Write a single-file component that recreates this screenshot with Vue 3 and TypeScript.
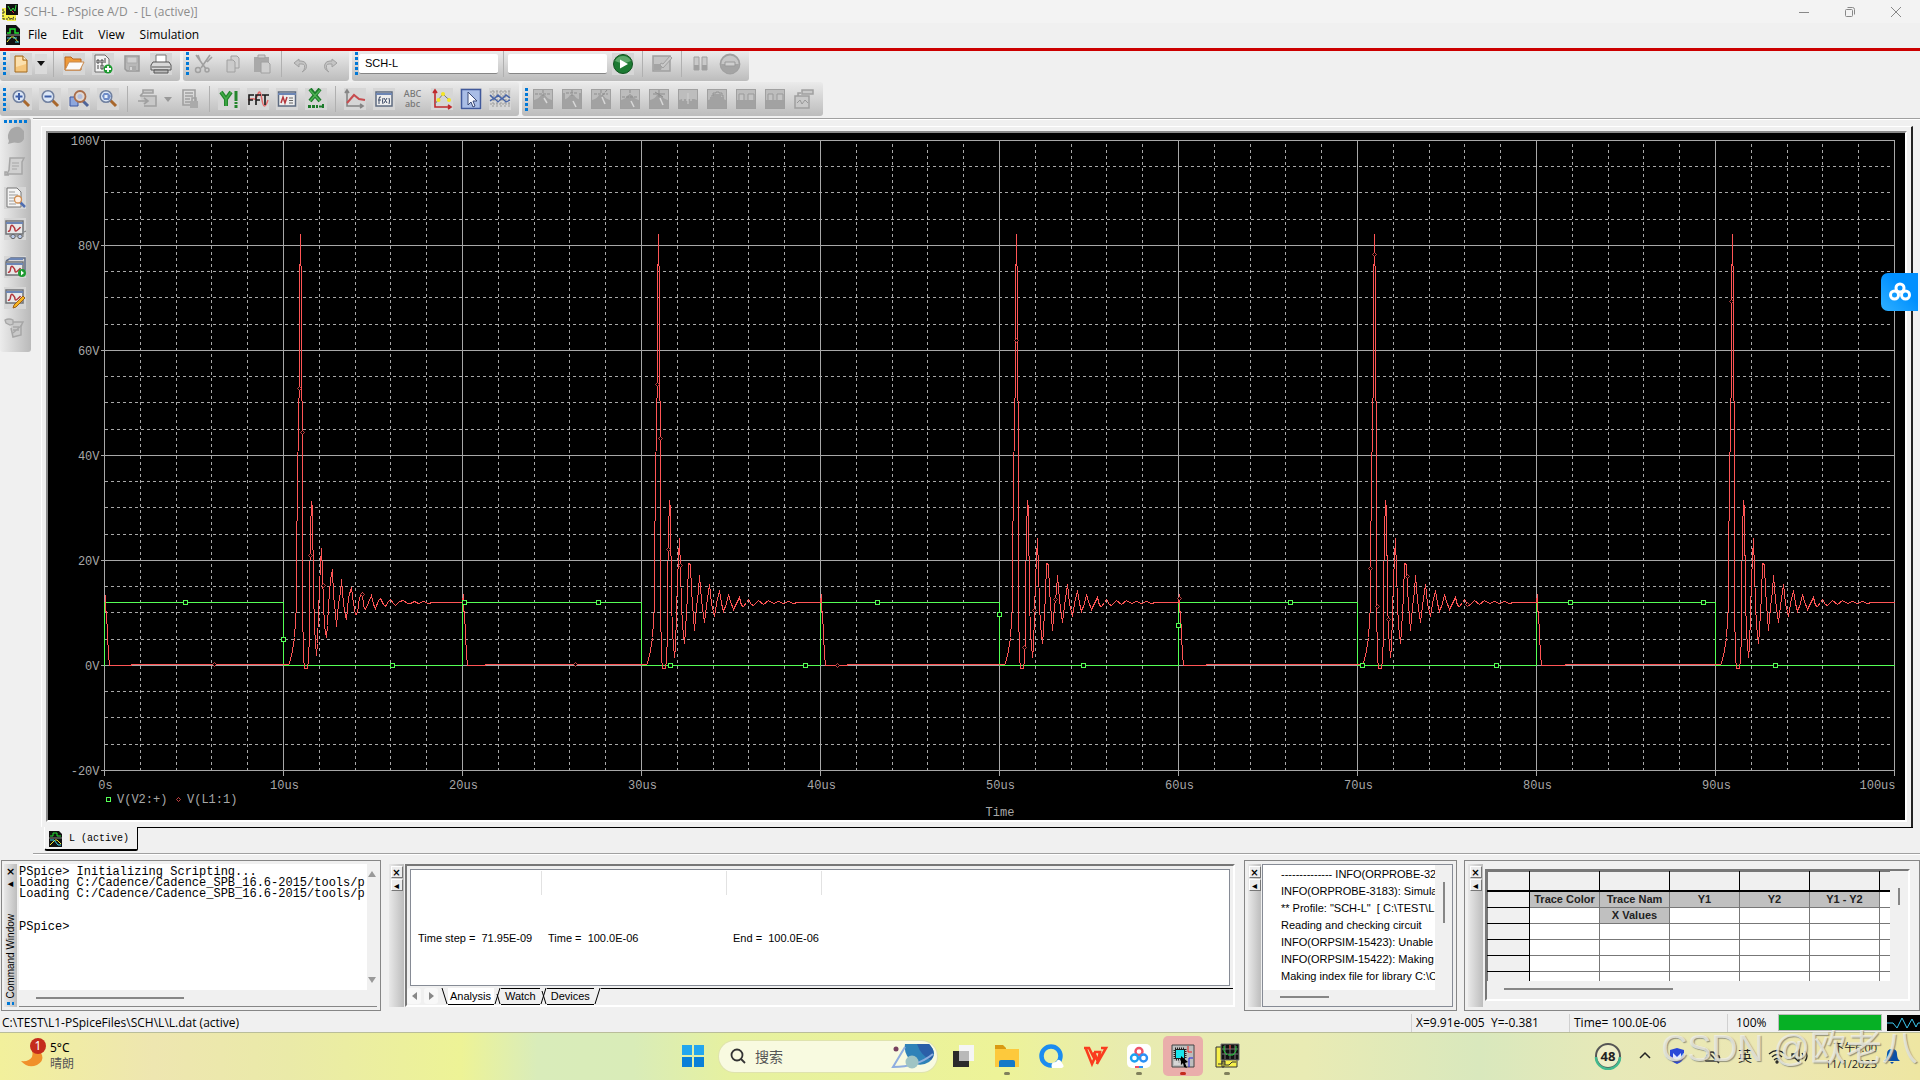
<script setup lang="ts">
import { ref } from 'vue'

interface Tool {
  icon?: string
  label?: string
  kind?: 'sep' | 'caret' | 'wide-sep'
  off?: boolean
}

const profile = ref('SCH-L')
const runTo = ref('')
const search = ref('')

const wave = '<rect x="2" y="3" width="17" height="13" fill="#e8e8e8" stroke="#6f7276" stroke-width="1.5"/><path d="M2 5h17" stroke="#6d86b5" stroke-width="2"/><path d="M4 13q2 1 2.500-3t2.500-2 2 4 2.500 0 3-3" fill="none" stroke="#b3353b" stroke-width="1.500"/>'
const probe = (mark: string) =>
  `<rect x="1.500" y="1.500" width="19" height="19" fill="#bcbcbc" stroke="#a0a0a0"/><path d="M2 12q5-1 7-5h4q2 4 7 5v8H2z" fill="#a2a2a2"/>${mark}`

const icons: Record<string, string> = {
  new: '<path d="M5 3h8l4 4v12H5z" fill="#f5c67c" stroke="#a0681f"/><path d="M6 4h6v4h4v3L6 14z" fill="#fbe0ae"/><path d="M13 3v4h4" fill="#fff3d8" stroke="#a0681f"/>',
  open: '<path d="M2 17V4h6l2 2h8v11z" fill="#ee9a3a" stroke="#b8641c"/><path d="M2 17L6 9h15l-4 8z" fill="#fbfbfb" stroke="#c98a4e"/>',
  add: '<path d="M3 2h10l4 4v13H3z" fill="#f3f3f3" stroke="#6d6d6d"/><path d="M5 7h2v3H5zM9 7h2v3H9zM13 5v5M6 12v4M9 12h2v4H9z" fill="none" stroke="#444"/><circle cx="16" cy="16" r="4.500" fill="#1d9a30"/><path d="M16 13v6M13 16h6" stroke="#fff" stroke-width="1.800"/>',
  save: '<path d="M4 3h14v15H6l-2-2z" fill="#b8b8b8" stroke="#999" stroke-width="1.500"/><path d="M6 4h10v6H6z" fill="#cfcfcf" stroke="#aaa"/><path d="M8 13h7v5H8z" fill="#aaa"/><path d="M9 14h2v3H9z" fill="#d4d4d4"/>',
  print: '<path d="M6 2h10v8H6z" fill="#fff" stroke="#777"/><path d="M3 9h16l2 3v5H1v-5z" fill="#d8d8d8" stroke="#555"/><path d="M2 14h18M4 17h14v3H4z" stroke="#555" fill="#bbb"/>',
  cut: '<path d="M3 2l10 14M17 2L8 15M5 2l2 5M19 4l-5 5" stroke="#a0a0a0" stroke-width="1.600"/><circle cx="5" cy="17" r="2.500" fill="none" stroke="#a0a0a0" stroke-width="1.500"/><circle cx="14" cy="17" r="2" fill="none" stroke="#a0a0a0" stroke-width="1.500"/>',
  copy: '<path d="M9 3h6l2 2v10H9z" fill="#d2d2d2" stroke="#a0a0a0"/><path d="M5 7h6l2 2v10H5z" fill="#cbcbcb" stroke="#a0a0a0"/>',
  paste: '<path d="M3 4h15v15H3z" fill="#a9a9a9"/><path d="M7 2h7v3H7z" fill="#d0d0d0" stroke="#a0a0a0"/><path d="M10 9h7l2 2v9h-9z" fill="#cfcfcf" stroke="#a0a0a0"/>',
  undo: '<path d="M9 6l-5 4 5 4v-3h3q4 0 2 6l-2 2q6-3 4-8-1-3-5-3H9z" fill="#c4c4c4" stroke="#a0a0a0"/>',
  redo: '<path d="M13 6l5 4-5 4v-3h-3q-4 0-2 6l2 2q-6-3-4-8 1-3 5-3h2z" fill="#c4c4c4" stroke="#a0a0a0"/>',
  play: '<circle cx="11" cy="11" r="9.500" fill="#1c7a32" stroke="#11521f"/><path d="M3 8a9 9 0 0 1 16 0q-8 4-16 0z" fill="#5da96b"/><path d="M8 6.500l8 4.500-8 4.500z" fill="#fff"/>',
  editsim: '<path d="M2 3h17v15H2z" fill="#c3c3c3" stroke="#a0a0a0" stroke-width="1.500"/><path d="M3 11h9l-2 6H3z" fill="#a4a4a4"/><path d="M9 12l3 3 9-10-2-2-7 8-2-1z" fill="#c9c9c9" stroke="#a0a0a0"/>',
  pause: '<path d="M4 4h5v13H4zM12 4h5v13h-5z" fill="#c9c9c9" stroke="#a0a0a0"/><path d="M4 12h5v5H4zM12 12h5v5h-5z" fill="#a0a0a0"/>',
  stop: '<circle cx="11" cy="11" r="9.500" fill="#c6c6c6" stroke="#a0a0a0" stroke-width="1.800"/><path d="M2 11h18q-1 9-9 9t-9-9z" fill="#a4a4a4"/><path d="M6 9h10v4H6z" fill="#cfcfcf" stroke="#999"/>',
  zin: '<path d="M13 12l6 6" stroke="#a8672c" stroke-width="3"/><circle cx="9" cy="8.500" r="5.800" fill="#dce7f6" stroke="#7181a0" stroke-width="1.500"/><path d="M9 5v7M5.500 8.500h7" stroke="#3d5ea8" stroke-width="2"/>',
  zout: '<path d="M13 12l6 6" stroke="#a8672c" stroke-width="3"/><circle cx="9" cy="8.500" r="5.800" fill="#dce7f6" stroke="#7181a0" stroke-width="1.500"/><path d="M5.500 8.500h7" stroke="#3d5ea8" stroke-width="2"/>',
  zarea: '<path d="M2 9h8v9H2z" fill="#8ea7dd" stroke="#3d56a0"/><path d="M15 13l5 5" stroke="#4f6599" stroke-width="3"/><circle cx="12" cy="8.500" r="5.500" fill="#dfd7d2" stroke="#ab6d49" stroke-width="1.800"/><circle cx="12" cy="8.500" r="2.500" fill="#b5bfdc"/>',
  zfit: '<path d="M13 12l6 6" stroke="#a8672c" stroke-width="3"/><circle cx="9" cy="8.500" r="5.800" fill="#dce7f6" stroke="#7181a0" stroke-width="1.500"/><path d="M5 8l2-3h4l3 3-2 4H7z" fill="#6f8cc8"/><path d="M7.500 7h3v3h-3z" fill="#e8f0fb"/>',
  expr: '<path d="M7 2h10v3H7zM4 8h16v10H8M4 8l3-3M2 13h9M8 10l4 3-4 3" fill="#c8c8c8" stroke="#a0a0a0" stroke-width="1.600"/>',
  lock: '<path d="M4 2h12v15H4zM6 5h8M6 8h8M6 11h5M6 14h5" fill="none" stroke="#a0a0a0" stroke-width="1.600"/><path d="M11 13h8v7h-8z" fill="#aaa"/><path d="M13 13v-3h4v3" fill="none" stroke="#a0a0a0" stroke-width="1.500"/>',
  yaxis: '<path d="M3 4l5 7v7M13 4l-5 7" fill="none" stroke="#23862c" stroke-width="4"/><path d="M3 4l5 7v7M13 4l-5 7" fill="none" stroke="#43ad48" stroke-width="1.500"/><path d="M18 3v17" stroke="#23862c" stroke-width="3" stroke-dasharray="10 1 2 1"/>',
  fft: '<path d="M1 12q4-2 6-1t4-5 4 6 6 0" fill="none" stroke="#e46b6b" stroke-width="1.500"/><path d="M2 17V7h5M2 12h4M9 17V7h5M9 12h4M15 7h7M18 7v10" fill="none" stroke="#1a1a1a" stroke-width="1.600"/>',
  perf: '<rect x="2.500" y="4" width="17" height="14" fill="#eee" stroke="#5e6b80" stroke-width="1.500"/><path d="M2 6h18" stroke="#6d86b5" stroke-width="2"/><path d="M5 15l2-6 2 6 2-6" fill="none" stroke="#b3353b" stroke-width="1.500"/><path d="M13 10h4M13 12.500h4M13 15h4" stroke="#666"/>',
  excel: '<path d="M5 1l10 12M15 1L5 13" stroke="#1c7a2a" stroke-width="4"/><path d="M5 2l10 11M15 2L5 13" stroke="#4db253" stroke-width="1.500"/><path d="M3 18.500h10" stroke="#1c7a2a" stroke-width="3" stroke-dasharray="3 1"/><path d="M14 18.500h5M18 16v4" stroke="#1c7a2a" stroke-width="2"/>',
  trace: '<path d="M3 2v16h16M1 5l2-3 2 3M16 16l3 2-3 2" fill="none" stroke="#858585" stroke-width="1.600"/><path d="M3 15l7-8 5 4 6 1" fill="none" stroke="#c74c4f" stroke-width="2"/>',
  func: '<rect x="3" y="4" width="16" height="14" fill="#eee" stroke="#5e6b80" stroke-width="1.500"/><path d="M3 6h16" stroke="#6d86b5" stroke-width="2"/><path d="M8 9q-2-1-2 2v5M5 12h3M10 10q-1 3 0 6M11 10l3 5M14 10l-3 5M16 10q1 3 0 6" fill="none" stroke="#3c4a66"/>',
  axes: '<path d="M4 2v17h16M2 5l2-3 2 3M17 17l3 2-3 2" fill="none" stroke="#c0282c" stroke-width="1.600"/><path d="M4 16l3-4 5-6 4 4 3 2" fill="none" stroke="#777"/><circle cx="7.500" cy="12" r="2" fill="#f4e522"/><circle cx="12" cy="6" r="2" fill="#f4e522"/><circle cx="18" cy="12" r="2" fill="#f4e522"/>',
  pick: '<rect x="1.500" y="1.500" width="19" height="19" fill="#a9bde6" stroke="#41599b" stroke-width="1.500"/><path d="M8 4v13l3-3 2 5 2-1-2-5h4z" fill="#f6f8ff" stroke="#3a4a77"/>',
  grid: '<path d="M1 4h20M1 8h20M1 12h20M1 16h20M4 2v18M8 2v18M12 2v18M16 2v18M20 2v18" stroke="#9b9b9b" stroke-dasharray="2 1"/><path d="M1 7l4 4 4-4 4 4 4-4 4 3" fill="none" stroke="#4664a8" stroke-width="1.500"/><path d="M1 13l4-3 4 4 4-4 4 4 4-2" fill="none" stroke="#4664a8" stroke-width="1.200"/>',
  p1: probe('<path d="M3 6h16M11 2v6" stroke="#8d8d8d" stroke-dasharray="3 1"/><path d="M12 10l3 5" stroke="#d8d8d8" stroke-width="1.500"/>'),
  p2: probe('<path d="M2 5h2v7h14V5h2v15H2z" fill="#a2a2a2"/><path d="M5 5h12M11 2v6" stroke="#8d8d8d" stroke-dasharray="3 1"/><path d="M12 13l3 6" stroke="#d8d8d8" stroke-width="1.500"/>'),
  p3: probe('<path d="M4 6h14M11 2v4M17 2l-5 6" stroke="#8d8d8d" stroke-dasharray="3 1"/><path d="M12 9l3 7" stroke="#d8d8d8" stroke-width="1.500"/>'),
  p4: probe('<path d="M3 9h16M11 2v5" stroke="#8d8d8d" stroke-dasharray="3 1"/><path d="M12 13l3 6" stroke="#d8d8d8" stroke-width="1.500"/>'),
  p5: probe('<path d="M5 6h12M11 2v7M7 4l8 5" stroke="#8d8d8d"/><path d="M12 10l3 7" stroke="#d8d8d8" stroke-width="1.500"/>'),
  p6: probe('<path d="M2 2h18v9H2z" fill="#bdbdbd"/><path d="M5 12h12" stroke="#d0d0d0" stroke-dasharray="2 2"/><path d="M11 5v11" stroke="#d0d0d0"/>'),
  p7: probe('<path d="M4 12V9h3V6h8v3h3v3z" fill="#a2a2a2"/><path d="M5 8h2V5h3V4h3v1h3v3h2" stroke="#949494" fill="none"/>'),
  p8: probe('<path d="M2 2h18v10H2z" fill="#bdbdbd"/><path d="M4 12V6h5v6M13 12V6h6v6" stroke="#999" fill="#c4c4c4"/>'),
  label: '<path d="M2 8h14v12H2zM9 2h11v4H9zM5 8V5h3" fill="#c9c9c9" stroke="#a0a0a0" stroke-width="1.500"/><path d="M4 15l3-3 2 4 3-4 3 3" fill="none" stroke="#999"/>',
  brk: '<path d="M7 4q6-4 10-1l3 3v8q-2 4-6 4-4-1-6 0l-4 1 1-3q-3-6 2-12z" fill="#a8a8a8"/>',
  script: '<path d="M6 2h14l-2 4v12H3l2-4zM3 16H1v3h4" fill="#d0d0d0" stroke="#a6a6a6" stroke-width="1.500"/><path d="M8 7h7M8 10h7M8 13h5" stroke="#a6a6a6"/>',
  view: '<path d="M3 1h10l4 4v15H3z" fill="#f4f4f4" stroke="#777"/><path d="M5 5h6M5 8h9M5 11h9M5 14h7M5 17h7" stroke="#999"/><path d="M16 15l5 5" stroke="#4f6db0" stroke-width="2.500"/><circle cx="14" cy="12.500" r="3.500" fill="#fff0e4" stroke="#cf8d50" stroke-width="1.300"/>',
  glass: wave + '<path d="M5 18h15M20 14l2-1" stroke="#777"/><circle cx="9" cy="18.500" r="2.200" fill="#b9c9e8" stroke="#666"/><circle cx="16" cy="18.500" r="2.200" fill="#b9c9e8" stroke="#666"/>',
  sweep: '<path d="M2 5l5-3h14v12l-3 4" fill="#d5d5d5" stroke="#5f6c87" stroke-width="1.500"/><path d="M5 3h14" stroke="#6d86b5" stroke-width="2"/><g transform="translate(0 3)">' + wave + '</g><circle cx="18" cy="17" r="4" fill="#1d9a30"/><path d="M17 14.500l3 2.500-3 2.500z" fill="#fff"/>',
  edit: wave + '<path d="M10 18l9-9 2 2-9 9-3 1z" fill="#f7b521" stroke="#9b5f18"/>',
  hand: '<path d="M8 4h11l-2 4v9l-8 2-2-9" fill="#c9c9c9" stroke="#a6a6a6" stroke-width="1.500"/><path d="M1 2q4-2 8 0v4l-3 1-4-2zM9 9h6M9 12h6M9 15l9-8" fill="#c9c9c9" stroke="#a6a6a6" stroke-width="1.300"/>',
}

const fileTools: Tool[] = [
  { icon: 'new', label: 'New' }, { kind: 'caret' }, { kind: 'wide-sep' },
  { icon: 'open', label: 'Open' }, { icon: 'add', label: 'Append' },
  { icon: 'save', label: 'Save', off: true }, { icon: 'print', label: 'Print' },
]
const editTools: Tool[] = [
  { icon: 'cut', label: 'Cut', off: true }, { icon: 'copy', label: 'Copy', off: true },
  { icon: 'paste', label: 'Paste', off: true }, { kind: 'sep' },
  { icon: 'undo', label: 'Undo', off: true }, { icon: 'redo', label: 'Redo', off: true },
]
const runTools: Tool[] = [
  { icon: 'play', label: 'Run' }, { kind: 'sep' },
  { icon: 'editsim', label: 'Edit profile', off: true }, { kind: 'sep' },
  { icon: 'pause', label: 'Pause', off: true }, { icon: 'stop', label: 'Stop', off: true },
]
const probeTools: Tool[] = [
  { icon: 'zin', label: 'Zoom in' }, { icon: 'zout', label: 'Zoom out' },
  { icon: 'zarea', label: 'Zoom area' }, { icon: 'zfit', label: 'Zoom fit' }, { kind: 'sep' },
  { icon: 'expr', label: 'Log X', off: true }, { kind: 'caret', off: true },
  { icon: 'lock', label: 'Lock', off: true }, { kind: 'sep' },
  { icon: 'yaxis', label: 'Log Y axis' }, { icon: 'fft', label: 'Fourier' },
  { icon: 'perf', label: 'Performance' }, { icon: 'excel', label: 'Export' }, { kind: 'sep' },
  { icon: 'trace', label: 'Add trace' }, { icon: 'func', label: 'Goal function' },
  { icon: 'text', label: 'Text label' }, { icon: 'axes', label: 'Mark data points' },
  { icon: 'pick', label: 'Select' }, { icon: 'grid', label: 'Grid' },
]
const cursorTools: Tool[] = ['p1', 'p2', 'p3', 'p4', 'p5', 'p6', 'p7', 'p8', 'p8', 'label']
  .map((icon, i) => ({ icon, label: `Cursor tool ${i + 1}`, off: true }))
const sideTools: Tool[] = [
  { icon: 'brk', label: 'Interrupt', off: true }, { icon: 'script', label: 'Script', off: true },
  { icon: 'view', label: 'View output' }, { icon: 'glass', label: 'View results' },
  { kind: 'sep' },
  { icon: 'sweep', label: 'Run all' }, { icon: 'edit', label: 'Edit settings' },
  { icon: 'hand', label: 'Annotate', off: true },
]

/* Plot scale: 179 units per 10us, 105 units per 20V */
const X0 = 56.5
const Y0 = 532.5
const TOP = 7.5
const BOTTOM = 637.5
const RIGHT = X0 + 1790
const majorX = Array.from({ length: 11 }, (_, i) => ({ x: X0 + i * 179, text: i ? `${i * 10}us` : '0s' }))
const majorY = Array.from({ length: 7 }, (_, i) => ({ y: TOP + i * 105, text: `${100 - i * 20}V` }))
const minorX = majorX.slice(0, 10).flatMap(m => [36, 72, 107, 143].map(d => m.x + d))
const minorY = majorY.slice(0, 6).flatMap(m => [26, 52, 79].map(d => m.y + d))

type Pt = [number, number]
const rise: Pt[] = [[0, 1], [5, 1], [6, 2], [9, 15], [11, 28], [12, 45], [13, 60], [13, 118], [14, 170], [15, 255], [16, 280], [16, 371], [17, 431], [18, 371], [18, 277], [19, 253], [19, 60], [20, 8], [21, -3], [24, -3], [25, 6], [26, 30], [26, 75]]
const ringFirst: Pt[] = [[27, 133], [28, 164], [29, 157], [30, 77], [31, 37], [33, 10], [34, 22], [35, 53], [36, 77], [37, 102], [38, 117], [39, 92], [40, 62], [41, 40], [43, 28], [44, 40], [45, 60], [47, 86], [49, 96], [50, 70], [52, 52], [53, 39], [55, 62], [57, 73], [58, 86], [60, 62], [62, 50], [63, 46], [65, 68], [68, 78], [70, 62], [72, 51], [74, 52], [76, 68], [79, 73], [80, 59], [82, 56], [85, 63], [88, 70], [90, 61], [92, 57], [95, 65], [97, 67], [100, 61], [102, 59], [105, 64], [107, 66], [110, 62], [112, 60], [116, 64], [120, 65], [124, 62], [127, 62], [131, 64], [135, 62], [140, 64], [145, 62], [149, 63]]
const ring: Pt[] = [[27, 133], [28, 165], [29, 156], [30, 66], [31, 33], [33, 8], [34, 18], [35, 52], [36, 86], [38, 127], [39, 95], [40, 62], [41, 40], [43, 22], [44, 35], [46, 70], [47, 102], [49, 101], [50, 75], [52, 48], [53, 35], [55, 58], [57, 75], [58, 90], [60, 65], [62, 50], [63, 43], [65, 60], [68, 81], [70, 62], [73, 49], [75, 62], [78, 75], [80, 62], [82, 54], [85, 62], [87, 71], [89, 64], [92, 56], [95, 62], [98, 68], [100, 60], [102, 59], [105, 63], [107, 66], [110, 61], [112, 60], [115, 63], [117, 65], [122, 61], [127, 65], [132, 62], [137, 64], [142, 62], [147, 64], [152, 62], [156, 63]]
const settle = [27, 23, 27, 28, 29]

const green = 'M56.5 532.5' + [0, 1, 2, 3, 4].map(i => {
  const x = X0 + i * 358
  return `V${Y0 - 63}H${x + 179}V${Y0}H${Math.min(x + 358, RIGHT)}`
}).join('')
const red = [0, 1, 2, 3, 4].map(i => {
  const x = X0 + i * 358
  const s = x + 179
  const pulse = rise.concat(i === 0 ? ringFirst : ring).map(([dx, dy]) => `L${s + dx} ${Y0 - dy}`).join('')
  return `${i ? 'L' : 'M'}${x + 1} ${Y0 - 71}V${Y0 - 54}L${x + 2} ${Y0 - 54}L${x + 3} ${Y0 - 30}L${x + 4} ${Y0 - 12}L${x + 5} ${Y0}H${x + settle[i]}V${Y0 - 1}H${s}${pulse}H${x + 358}`
}).join('')

const squares: Pt[] = [[137, 469], [235, 506], [344, 532], [416, 469], [550, 469], [622, 532], [757, 532], [829, 469], [951, 481], [1035, 532], [1130, 492], [1242, 469], [1314, 532], [1448, 532], [1522, 469], [1655, 469], [1727, 532]]
const diamonds: Pt[] = [[166, 531], [251, 255], [254, 299], [262, 422], [275, 452], [314, 461], [527, 531], [609, 251], [612, 305], [620, 416], [632, 432], [789, 532], [968, 207], [976, 514], [986, 477], [1007, 466], [1131, 465], [1326, 121], [1322, 435], [1329, 473], [1340, 486], [1359, 443], [1419, 471], [1683, 168]]

const messages = [
  '-------------- INFO(ORPROBE-3209): Starting',
  'INFO(ORPROBE-3183): Simulation profile',
  '** Profile: "SCH-L"  [ C:\\TEST\\L1-PSpiceFiles',
  'Reading and checking circuit',
  'INFO(ORPSIM-15423): Unable to find index',
  'INFO(ORPSIM-15422): Making new index',
  'Making index file for library C:\\Cadence',
]
const consoleText = `PSpice> Initializing Scripting...
Loading C:/Cadence/Cadence_SPB_16.6-2015/tools/p
Loading C:/Cadence/Cadence_SPB_16.6-2015/tools/p


PSpice>`
</script>

<template>
  <div class="app">
    <header class="title">
      <svg class="app-icon" width="16" height="18" viewBox="0 0 16 18"><path d="M0 5h6v12H0zM5 12h9v6H5z" fill="#f6f04a" /><path d="M1 6v10M1 9h3M6 14l3 2 3-2M1 16h13" stroke="#333" stroke-dasharray="2 1" fill="none" /><path d="M4 1h12v11H4z" fill="#111" /><path d="M6 3l3 5 2-3 2 3 1-6" stroke="#2edb3c" fill="none" /><path d="M10 8l2 2" stroke="#e33" /></svg>
      <h1>SCH-L - PSpice A/D&nbsp; - [L (active)]</h1>
      <div class="win">
        <button aria-label="Minimize"><svg width="12" height="12"><path d="M1 6.500h10" stroke="#888" /></svg></button>
        <button aria-label="Restore"><svg width="12" height="12" fill="none" stroke="#888"><rect x="1.500" y="3.500" width="7" height="7" rx="1" /><path d="M3.500 1.500h5q2 0 2 2v5" /></svg></button>
        <button aria-label="Close"><svg width="12" height="12"><path d="M1 1l10 10M11 1L1 11" stroke="#888" /></svg></button>
      </div>
    </header>
    <nav class="menu">
      <svg width="14" height="20" viewBox="0 0 14 20"><path d="M0 0h10l4 4v16H0z" fill="#111" /><path d="M1 8h3V4h5v4h4" stroke="#20e030" stroke-width="1.500" fill="none" /><path d="M0 10h14" stroke="#999" /><path d="M1 17l4-5h3l4 5" stroke="#f0e830" fill="none" /><path d="M1 13h4M9 17h4M7 13h4" stroke="#3fd4e8" /></svg>
      <button>File</button><button>Edit</button><button>View</button><button>Simulation</button>
    </nav>

    <div class="bars">
      <div class="row first">
        <div v-for="(set, n) in [fileTools, editTools]" :key="n" class="group">
          <i class="grip"></i>
          <template v-for="(t, i) in set" :key="i">
            <button v-if="t.icon" class="tool" :aria-label="t.label" :disabled="t.off"><svg viewBox="0 0 22 22" v-html="icons[t.icon]"></svg></button>
            <button v-else-if="t.kind === 'caret'" class="caret" aria-label="More"></button>
            <i v-else class="sep" :class="{ wide: t.kind === 'wide-sep' }"></i>
          </template>
        </div>
        <div class="group">
          <i class="grip"></i>
          <input v-model="profile" class="profile" aria-label="Simulation profile" />
          <i class="sep"></i>
          <input v-model="runTo" class="runto" aria-label="Run to time" />
          <template v-for="(t, i) in runTools" :key="i">
            <button v-if="t.icon" class="tool" :aria-label="t.label" :disabled="t.off"><svg viewBox="0 0 22 22" v-html="icons[t.icon]"></svg></button>
            <i v-else class="sep"></i>
          </template>
        </div>
      </div>
      <div class="row second">
        <div v-for="(set, n) in [probeTools, cursorTools]" :key="n" class="group">
          <i class="grip"></i>
          <template v-for="(t, i) in set" :key="i">
            <button v-if="t.icon === 'text'" class="tool abc">ABC<br />abc</button>
            <button v-else-if="t.icon" class="tool" :aria-label="t.label" :disabled="t.off"><svg viewBox="0 0 22 22" v-html="icons[t.icon]"></svg></button>
            <button v-else-if="t.kind === 'caret'" class="caret" aria-label="More" disabled></button>
            <i v-else class="sep"></i>
          </template>
        </div>
      </div>
    </div>

    <main class="body">
      <aside class="side">
        <i class="grip flat"></i>
        <template v-for="(t, i) in sideTools" :key="i">
          <button v-if="t.icon" class="tool" :aria-label="t.label" :disabled="t.off"><svg viewBox="0 0 22 22" v-html="icons[t.icon]"></svg></button>
          <i v-else class="gap"></i>
        </template>
      </aside>
      <section class="work">
        <div class="frame">
          <div class="plot">
            <svg viewBox="0 0 1857 687" class="chart">
              <g stroke="#a8a8a8" stroke-dasharray="3 3">
                <path v-for="x in minorX" :key="x" :d="`M${x} ${TOP + 3}V${BOTTOM}`" />
                <path v-for="y in minorY" :key="y" :d="`M${X0} ${y}H${RIGHT - 4}`" />
              </g>
              <g stroke="#a8a8a8">
                <path v-for="m in majorX" :key="m.x" :d="`M${m.x} ${TOP}V${BOTTOM + 5}`" />
                <path v-for="m in majorY" :key="m.y" :d="`M${X0 - 4} ${m.y}H${RIGHT}`" />
              </g>
              <path :d="green" stroke="#55ff55" fill="none" />
              <path :d="red" stroke="#ff5555" fill="none" />
              <rect v-for="([x, y], i) in squares" :key="'s' + i" :x="x - 1.5" :y="y - 1.5" width="4" height="4" fill="#000" stroke="#55ff55" />
              <path v-for="([x, y], i) in diamonds" :key="'d' + i" class="diamond" :d="`M${x - 1.5} ${y + 0.5}l2-2 2 2-2 2z`" />
              <g class="axis">
                <text v-for="m in majorY" :key="m.y" :x="X0 - 5" :y="m.y + 4" text-anchor="end">{{ m.text }}</text>
                <text v-for="(m, i) in majorX" :key="m.x" :x="i === 10 ? RIGHT + 1 : m.x + 1" y="656" :text-anchor="i === 10 ? 'end' : 'middle'">{{ m.text }}</text>
                <text x="952" y="683" text-anchor="middle">Time</text>
                <text x="69" y="670">V(V2:+)</text>
                <text x="139" y="670">V(L1:1)</text>
              </g>
              <rect x="58.500" y="664.500" width="4" height="4" fill="none" stroke="#55ff55" />
              <path class="diamond" d="M128.500 666.500l2-2 2 2-2 2z" />
            </svg>
          </div>
        </div>
        <div class="tabs">
          <button class="tab">
            <svg width="13" height="16" viewBox="0 0 13 16"><path d="M0 0h10l3 3v13H0z" fill="#111" /><path d="M1 5h3V2h4v3h4" stroke="#20e030" fill="none" /><path d="M0 7h13" stroke="#888" /><path d="M1 14l5-5h2l4 4" stroke="#f0e830" fill="none" /><path d="M1 9h4l4 5h3" stroke="#3fd4e8" fill="none" /></svg>
            L (active)
          </button>
          <i class="tab-line"></i>
        </div>
      </section>
    </main>

    <section class="docks">
      <div class="dock cmd">
        <div class="strip">
          <button aria-label="Close panel">×</button><button aria-label="Pin panel">◂</button>
          <span>Command Window</span><i class="mini"></i>
        </div>
        <div class="console">
          <pre>{{ consoleText }}</pre>
          <div class="vscroll"><i class="up"></i><i class="down"></i></div>
          <div class="hscroll"><i></i></div>
        </div>
      </div>

      <div class="dock out">
        <div class="strip raised"><button aria-label="Close panel">×</button><button aria-label="Pin panel">◂</button></div>
        <div class="outbox">
          <div class="sheet">
            <div class="cells"><i></i><i></i><i></i></div>
            <div class="vals"><span>Time step =&nbsp; 71.95E-09</span><span>Time =&nbsp; 100.0E-06</span><span>End =&nbsp; 100.0E-06</span></div>
          </div>
          <div class="sheet-tabs">
            <button class="arrow left" aria-label="Previous"></button><button class="arrow right" aria-label="Next"></button>
            <svg width="7" height="17"><path d="M1 0l5 16" stroke="#000" /></svg>
            <button class="on">Analysis</button>
            <svg width="7" height="17"><path d="M6 0L1 16M3 6l3 10" stroke="#000" /></svg>
            <button>Watch</button>
            <svg width="7" height="17"><path d="M6 0L1 16M2 3l4 13" stroke="#000" /></svg>
            <button>Devices</button>
            <svg width="7" height="17"><path d="M6 0L1 16" stroke="#000" /></svg>
          </div>
        </div>
      </div>

      <div class="dock info">
        <div class="strip raised"><button aria-label="Close panel">×</button><button aria-label="Pin panel">◂</button></div>
        <div class="list">
          <ul><li v-for="m in messages" :key="m">{{ m }}</li></ul>
          <i class="vthumb"></i>
          <i class="hthumb"></i>
        </div>
      </div>

      <div class="dock data">
        <div class="strip raised"><button aria-label="Close panel">×</button><button aria-label="Pin panel">◂</button></div>
        <div class="gridbox">
          <div class="clip">
            <table>
              <colgroup><col class="c0" /><col v-for="n in 6" :key="n" class="c1" /></colgroup>
              <thead>
                <tr><th v-for="n in 7" :key="n"></th></tr>
              </thead>
              <tbody>
                <tr><th></th><td class="h">Trace Color</td><td class="h">Trace Nam</td><td class="h">Y1</td><td class="h">Y2</td><td class="h">Y1 - Y2</td><td></td></tr>
                <tr><th></th><td></td><td class="h">X Values</td><td></td><td></td><td></td><td></td></tr>
                <tr v-for="n in 4" :key="n"><th></th><td v-for="k in 6" :key="k"></td></tr>
              </tbody>
            </table>
          </div>
          <i class="vthumb"></i>
          <i class="hthumb"></i>
        </div>
      </div>
    </section>

    <footer class="status">
      <span class="path">C:\TEST\L1-PSpiceFiles\SCH\L\L.dat (active)</span>
      <span class="pos">X=9.91e-005&nbsp; Y=-0.381</span>
      <span class="time">Time= 100.0E-06</span>
      <span class="pct">100%</span>
      <i class="bar"></i>
      <svg width="33" height="16" viewBox="0 0 33 16"><path d="M0 0h33v16H0z" fill="#000" /><path d="M0 8h6l4 5 5-10 5 10 5-9 4 8 2-4h4" stroke="#3cc8f0" fill="none" /></svg>
    </footer>

    <div class="taskbar">
      <button class="weather">
        <svg width="30" height="36" viewBox="0 0 30 36"><path d="M2 24q8 1 11-4 1-3 0-7 8 0 10 5 2 6-5 10-9 4-16-4z" fill="#f0902a" /><circle cx="19" cy="9" r="8" fill="#c42b1c" /><text x="19" y="13" text-anchor="middle" font-size="12" fill="#fff">1</text></svg>
        <span>5°C<br /><em>晴朗</em></span>
      </button>
      <div class="center">
        <button class="app-btn" aria-label="Start"><svg width="24" height="24"><path d="M1 1h10v10H1zM13 1h10v10H13z" fill="#22a6ee" /><path d="M1 13h10v10H1zM13 13h10v10H13z" fill="#087fd8" /></svg></button>
        <label class="search">
          <svg width="16" height="16" fill="none" stroke="#333" stroke-width="1.800"><circle cx="7" cy="7" r="5.500" /><path d="M11 11l4 4" /></svg>
          <input v-model="search" placeholder="搜索" aria-label="搜索" />
          <svg width="44" height="28" viewBox="0 0 44 28"><path d="M14 2h24q10 10 0 18-6 4-14 2Q12 14 14 2z" fill="#2f82b8" /><path d="M26 2h12q8 8 2 16-10-4-14-16z" fill="#2b5fa8" /><path d="M14 5L2 25q24 0 40-13" stroke="#8eaee0" stroke-width="2" fill="none" /><circle cx="21" cy="20" r="6.500" fill="#9fc4c4" /><circle cx="5" cy="7" r="2.500" fill="#77405f" /></svg>
        </label>
        <button class="app-btn" aria-label="Task view"><svg width="28" height="28"><path d="M4 9h16v16H4z" fill="#2b2b2b" /><path d="M10 3h15v16H10z" fill="#f5f5f5" /><path d="M10 9h10v10H10z" fill="#b9b9b9" /></svg></button>
        <button class="app-btn run" aria-label="Explorer"><svg width="28" height="28"><path d="M2 3h8l3 3v4H2z" fill="#d99a12" /><path d="M2 7h24v18H2z" fill="#fdc93c" /><path d="M6 25v-5q0-2 2-2h12q2 0 2 2v5z" fill="#1479c8" /></svg></button>
        <button class="app-btn" aria-label="Browser"><svg width="28" height="28"><circle cx="14" cy="14" r="9.500" fill="none" stroke="#1b8cf0" stroke-width="4.500" /><path d="M15 26q-2-6 4-6 3-5 6 1 4 5-2 5z" fill="#fff" /></svg></button>
        <button class="app-btn" aria-label="WPS"><svg width="28" height="28" fill="none" stroke="#fa3c1e" stroke-width="2.600"><path d="M3 6h5l5 10M5 7l6 15 4-9M13 10h6l-3 12M13 10l4 10 8-14h-5" /></svg></button>
        <button class="app-btn run" aria-label="Netdisk"><svg width="28" height="28"><rect x="2" y="2" width="24" height="24" rx="5" fill="#fff" /><g fill="none" stroke-width="2.400"><circle cx="14" cy="9.500" r="3.500" stroke="#ee5066" /><circle cx="9.500" cy="16" r="3.500" stroke="#1ba0f2" /><circle cx="18.500" cy="16" r="3.500" stroke="#2b90f5" /></g><path d="M10 25h4" stroke="#ee5066" stroke-width="2" /><path d="M14 25h4" stroke="#2b90f5" stroke-width="2" /></svg></button>
        <button class="app-btn run hot" aria-label="Capture"><svg width="28" height="28"><path d="M3 3h22v22H3z" fill="#bdbdbd" stroke="#444" /><path d="M6 7h10v10H6z" fill="#222" stroke="#222" stroke-dasharray="1 1" stroke-width="3" /><path d="M7 8h8v8H7z" fill="#18e6ee" /><path d="M19 4v6h4" stroke="#e22" fill="none" /><path d="M20 25v-9h4" stroke="#22d" fill="none" /><path d="M5 20h4M5 22h6" stroke="#eee" /><path d="M12 14l7 6-3 1 2 5-3-1-1-4-2 2z" fill="#000" /></svg></button>
        <button class="app-btn run" aria-label="PSpice"><svg width="28" height="28"><path d="M3 5h8v20H3zM9 17h15v8H9z" fill="#f6f04a" stroke="#333" /><path d="M5 22h4v-3h3v4h4l3-3h4" stroke="#333" fill="none" /><path d="M8 2h18v16H8z" fill="#111" stroke="#777" /><path d="M12 3v14M17 3v14M22 3v14M9 7h16M9 12h16" stroke="#777" /><path d="M11 4v5l3 4M23 4v5l-3 4h-5" stroke="#1fd43c" fill="none" /><path d="M17 3v4" stroke="#e33" /></svg></button>
      </div>
      <div class="tray">
        <svg width="28" height="28" viewBox="0 0 28 28"><circle cx="14" cy="14" r="12" fill="#eeeec8" stroke="#555" stroke-width="2" /><path d="M2 15a12 12 0 0 0 24 0" fill="none" stroke="#43b98e" stroke-width="2.500" /><text x="14" y="19" text-anchor="middle" font-size="13" font-weight="bold" fill="#222">48</text></svg>
        <svg width="14" height="14" fill="none" stroke="#222" stroke-width="1.500"><path d="M2 9l5-5 5 5" /></svg>
        <svg width="18" height="18"><path d="M9 1l7 2v6q0 5-7 8-7-3-7-8V3z" fill="#2947d8" /><path d="M5 6l4 4 4-4v5l-4 3-4-3z" fill="#dfe5ff" /></svg>
        <svg width="20" height="18" fill="none" stroke="#333" stroke-width="1.500"><path d="M4 14h11q4-1 2-5-2-1-3 0-2-6-7-3-3 3-2 4-3 1-1 4zM3 2l14 14" /></svg>
        <span class="ime">英</span>
        <svg class="wifi" width="18" height="16" fill="none" stroke="#222" stroke-width="1.300"><path d="M1 6q8-7 16 0M4 9q5-5 10 0M6 12q3-3 6 0" /><circle cx="9" cy="14" r="1" /></svg>
        <svg width="18" height="16" fill="none" stroke="#222" stroke-width="1.300"><path d="M1 6h3l4-4v12l-4-4H1zM11 5q2 3 0 6M14 3q4 5 0 10" /></svg>
        <span class="clock">下午6:00<br />11/1/2025</span>
        <svg class="bell" width="20" height="18"><path d="M2 14q3-2 3-7 0-5 5-5t5 5q0 5 3 7z" fill="#0a50a8" /><path d="M8 15h4l-2 2z" fill="#0a50a8" /></svg>
      </div>
      <div class="mark">CSDN @欧老八</div>
    </div>

    <button class="float" aria-label="Netdisk">
      <svg width="24" height="20" fill="none" stroke="#fff" stroke-width="3"><circle cx="12" cy="6" r="4" /><circle cx="6.500" cy="13" r="4" /><circle cx="17.500" cy="13" r="4" /></svg>
    </button>
  </div>
</template>

<style>
body { background: #f0f0f0; }
</style>

<style scoped>
* { box-sizing: border-box; }
.app { position: relative; display: flex; flex-direction: column; min-height: 100vh; overflow: hidden; background: #f0f0f0; color: #000; font: 12px/16px "Open Sans", "Noto Sans CJK SC", sans-serif; }
button { border: 0; padding: 0; background: none; font: inherit; color: inherit; }
svg { display: block; flex: none; }
i { display: block; flex: none; }
.title { display: flex; align-items: center; height: 23px; background: #f3f3f3; color: #8c8c8c; padding-left: 2px; }
h1 { margin: 0 0 0 6px; font-size: 12px; font-weight: 400; flex: 1; }
.win { display: flex; gap: 34px; padding-right: 18px; }
.win button { width: 12px; height: 12px; }
.menu { display: flex; align-items: center; gap: 15px; height: 28px; padding: 0 0 1px 6px; border-bottom: 3px solid #c00; }
.menu svg { margin-right: -7px; }

.row { display: flex; }
.row.second { margin-top: 1px; }
.group { display: flex; align-items: center; height: 34px; padding: 0 5px 0 3px; margin-right: 3px; border-radius: 3px; background: linear-gradient(#ebebeb, #bcbcbc); }
.first .group { height: 30px; padding-bottom: 5px; border-radius: 0 0 3px 3px; }
.grip { width: 3px; height: 23px; background: repeating-linear-gradient(#0078d7 0 3px, transparent 3px 5px); }
.tool { display: flex; align-items: center; justify-content: center; width: 29px; height: 24px; }
.tool svg { width: 22px; height: 22px; background: #d6d6d6; }
.tool:disabled svg { background: none; }
.abc { font: 500 9px/10px "Noto Sans", sans-serif; color: #777; }
.caret { width: 14px; height: 20px; display: flex; align-items: center; justify-content: center; }
.first .caret { width: 12px; background: #dadada; }
.caret::before { content: ""; border: 4px solid transparent; border-top: 5px solid #111; border-bottom: 0; }
.caret:disabled::before { border-top-color: #999; }
.sep { width: 10px; height: 26px; border-left: 1px solid #b0b0b0; margin-left: 5px; margin-right: -5px; }
.sep.wide { width: 12px; margin-left: 6px; margin-right: -6px; }
.profile, .runto { height: 20px; border: 0; border-bottom: 1px solid #868686; border-radius: 2px; background: #fff; padding: 0 6px; font: 11px/16px "Liberation Sans", sans-serif; color: #000; outline: 0; }
.profile { width: 139px; margin-left: 1px; }
.runto { width: 99px; margin: 0 1px 0 0; }

.body { display: flex; align-items: flex-start; margin-top: 2px; }
.side { width: 31px; height: 234px; border-radius: 3px; background: linear-gradient(90deg, #ececec, #b9b9b9); display: flex; flex-direction: column; align-items: center; padding-top: 2px; gap: 7px; }
.side .tool { margin-left: -1px; }
.side .grip { margin-bottom: -6px; }
.gap { height: 0; }
.grip.flat { width: 23px; height: 3px; background: repeating-linear-gradient(90deg, #0078d7 0 3px, transparent 3px 5px); }
.work { flex: 1; margin-left: 2px; min-width: 0; border-top: 1px solid #a0a0a0; border-bottom: 1px solid #a0a0a0; padding: 7px 7px 2px 8px; box-shadow: inset 0 1px #fff, 0 1px #fff; }
.frame { border: solid; border-width: 1px 2px 0 1px; border-color: #fff #222 #fff #fff; padding: 4px 4px 5px; }
.plot { border: 2px solid #8a8a8a; border-right-color: #fff; border-bottom-color: #fff; background: #000; }
.chart { width: 100%; height: auto; shape-rendering: crispEdges; }
.diamond { fill: #000; stroke: #ff5555; stroke-opacity: 0.75; shape-rendering: auto; }
.axis text { fill: #a8a8a8; font: 12px "Liberation Mono", monospace; }
.tabs { display: flex; align-items: flex-start; }
.tab { display: flex; align-items: center; gap: 7px; width: 94px; height: 24px; margin-left: 3px; padding: 2px 0 0 4px; border-right: 1px solid #000; border-bottom: 2px solid #000; border-left: 1px solid #fff; border-radius: 0 0 2px 3px; font: 10px/14px "Liberation Mono", monospace; white-space: nowrap; }
.tab-line { flex: 1; height: 1px; background: #000; }

.docks { display: flex; height: 151px; margin-top: 6px; gap: 7px; padding-left: 1px; font: 11px/17px "Liberation Sans", sans-serif; }
.dock { display: flex; border: 1px solid #868686; padding: 3px; min-width: 0; }
.strip { width: 15px; flex: none; display: flex; flex-direction: column; align-items: center; background: linear-gradient(90deg, #e8e8e8, #bdbdbd); padding-top: 2px; }
.strip button { width: 12px; height: 12px; font: bold 11px/12px "DejaVu Sans", sans-serif; }
.strip.raised button { border: 1px solid #777; border-color: #fff #777 #777 #fff; background: #ececec; line-height: 9px; margin-bottom: 1px; font-size: 10px; }
.strip span { writing-mode: vertical-rl; transform: rotate(180deg); margin-top: auto; font: 10px/12px "Liberation Sans", sans-serif; white-space: nowrap; }
.mini { width: 7px; height: 3px; margin: 4px 0 2px; background: repeating-linear-gradient(90deg, #0078d7 0 3px, transparent 3px 5px); }
.cmd { width: 380px; flex: none; padding-left: 2px; }
.cmd .strip { width: 13px; margin-right: 2px; }
.console { flex: 1; min-width: 0; display: grid; grid-template-columns: 1fr 10px; grid-template-rows: 1fr 16px; background: #fff; border-bottom: 1px solid #868686; }
pre { margin: 0; padding: 3px 0 0; overflow: hidden; font: 12px/11px "Liberation Mono", monospace; }
.vscroll { background: #f0f0f0; display: flex; flex-direction: column; justify-content: space-between; align-items: center; padding: 7px 0; }
.up, .down { border: 4px solid transparent; }
.up { border-bottom: 6px solid #999; border-top: 0; }
.down { border-top: 6px solid #999; border-bottom: 0; }
.hscroll { grid-column: 1 / 3; background: #f0f0f0; padding: 7px 0 0 17px; }
.hscroll i { width: 148px; height: 2px; background: #868686; }

.out { flex: 1; border-color: transparent; border-right: 0; padding-left: 0; padding-right: 0; }
.outbox { flex: 1; min-width: 0; border: 2px solid #777; border-color: #777 #fff #fff #777; margin-left: 1px; display: flex; flex-direction: column; }
.sheet { flex: 1; margin: 3px 3px 2px 3px; border: 1px solid #868b95; background: #fff; display: flex; flex-direction: column; }
.cells { display: flex; height: 24px; margin-top: 1px; }
.cells i { border-right: 1px solid #e2e2e2; }
.cells i:nth-child(1) { width: 131px; }
.cells i:nth-child(2) { width: 185px; }
.cells i:nth-child(3) { width: 95px; }
.vals { display: flex; margin: 35px 0 0 7px; white-space: pre; }
.vals span:nth-child(1) { width: 130px; }
.vals span:nth-child(2) { width: 185px; }
.sheet-tabs { display: flex; align-items: flex-start; height: 17px; line-height: 17px; }
.sheet-tabs::after { content: ""; flex: 1; height: 1px; background: #000; order: 9; }
.sheet-tabs button { padding: 0 4px; border-top: 1px solid #000; border-bottom: 1px solid #000; height: 17px; line-height: 15px; }
.sheet-tabs .on { padding: 0 3px 0 2px; background: #fff; border-top-color: #fff; }
.sheet-tabs .arrow { width: 14px; height: 16px; padding: 0; border: 0; margin-right: 3px; display: flex; align-items: center; justify-content: center; border-radius: 3px; background: #f8f8f8; }
.arrow::before { content: ""; border: 4px solid transparent; }
.arrow.left::before { border-right: 5px solid #888; border-left: 0; }
.arrow.right::before { border-left: 5px solid #888; border-right: 0; }

.info { width: 213px; flex: none; margin-left: 2px; }
.info .strip { width: 13px; }
.list { flex: 1; min-width: 0; margin-left: 1px; display: grid; grid-template-columns: 1fr 17px; grid-template-rows: 1fr 16px; background: #f0f0f0; border: 1px solid #868b95; }
ul { list-style: none; margin: 0; padding: 1px 0 0 18px; background: #fff; overflow: hidden; white-space: pre; }
.vthumb { width: 2px; background: #868686; }
.info .vthumb { height: 41px; margin: 17px 0 0 8px; }
.hthumb { height: 2px; background: #868686; }
.info .hthumb { width: 49px; margin: 6px 0 0 17px; }
.data { width: 456px; flex: none; }
.gridbox { flex: 1; min-width: 0; margin: 5px 6px 6px 2px; display: grid; grid-template-columns: 1fr 18px; grid-template-rows: 1fr 18px; border: 2px solid #777; border-color: #777 #fff #fff #777; }
.clip { overflow: hidden; }
table { border-collapse: collapse; table-layout: fixed; width: 462px; }
.c0 { width: 42px; }
.c1 { width: 70px; }
td, th { height: 16px; padding: 0; border: 1px solid #777; background: #fff; font-weight: 400; line-height: 15px; white-space: nowrap; overflow: hidden; text-align: center; }
th { background: #f0f0f0; border-right-color: #000; border-bottom-color: #000; }
thead th { height: 19px; border-bottom: 2px solid #000; }
td.h { background: #c0c0c0; font-weight: 700; color: #222; }
.data .vthumb { height: 17px; margin: 17px 0 0 8px; }
.data .hthumb { width: 169px; margin: 7px 0 0 17px; }

.status { display: flex; align-items: center; height: 21px; padding: 2px 0 0 2px; }
.path { flex: 1; }
.pos, .time, .pct { border-left: 1px solid #d0d0d0; padding-left: 4px; line-height: 18px; white-space: pre; }
.pos { width: 158px; }
.time { width: 158px; }
.pct { width: 48px; padding-left: 8px; }
.bar { width: 104px; height: 17px; margin: 0 5px 0 3px; background: #06b025; border: 1px solid #bcbcbc; }

.taskbar { position: relative; flex: 1 0 48px; height: 48px; display: flex; align-items: center; justify-content: center; padding-bottom: 1px; border-top: 1px solid #b9bd9a; background: linear-gradient(90deg, #f2f09c 0, #eee6b0 8%, #eaeaa8 15%, #edf396 24%, #d9ecba 28%, #d9ecb8 33%, #e6f1a0 38%, #edf398 52%, #e8ebb0 59%, #e9ebb4 68%, #d9e8bd 77%, #e7e9b8 84%, #ece7b2 92%, #eee6a2 100%); }
.weather { position: absolute; left: 19px; top: 4px; display: flex; gap: 1px; text-align: left; font: 12px/16px "Noto Sans", "Noto Sans CJK SC", sans-serif; }
.weather span { padding-top: 3px; }
em { font-style: normal; color: #555; }
.center { display: flex; align-items: center; }
.app-btn { position: relative; width: 40px; height: 40px; margin: 0 2px; border-radius: 5px; display: flex; align-items: center; justify-content: center; }
.app-btn.run::after { content: ""; position: absolute; bottom: 1px; left: 17px; width: 6px; height: 3px; border-radius: 2px; background: #80805c; }
.app-btn.hot { background: #eaaeab; }
.app-btn.hot::after { background: #c42b1c; }
.search { display: flex; align-items: center; width: 218px; height: 31px; margin: 0 4px; padding: 0 2px 0 11px; border-radius: 16px; background: #f8fae0; box-shadow: 0 0 0 1px #dfe3ae; gap: 9px; }
.search input { flex: 1; min-width: 0; border: 0; background: none; outline: 0; padding: 0; font: 14px/20px "Noto Sans CJK SC", sans-serif; }
.search input::placeholder { color: #555; }
.tray { position: absolute; right: 18px; top: 0; height: 46px; display: flex; align-items: center; gap: 16px; color: #222; }
.ime { font-size: 14px; }
.wifi { margin-right: -11px; }
.bell { margin-left: -11px; }
.clock { text-align: right; font-size: 11px; }
.mark { position: absolute; right: 2px; top: -6px; font: 36px/44px "Liberation Sans", "Noto Sans CJK SC", sans-serif; color: rgba(240, 240, 232, 0.8); text-shadow: 1px 1px 1px rgba(110, 110, 100, 0.7); pointer-events: none; white-space: nowrap; }
.float { position: absolute; right: 0; top: 273px; width: 39px; height: 38px; padding-left: 7px; border-radius: 7px 0 0 7px; background: linear-gradient(45deg, #30b0ff, #0090ff 60%); border-right: 2px solid #e8f4ff; }
</style>
